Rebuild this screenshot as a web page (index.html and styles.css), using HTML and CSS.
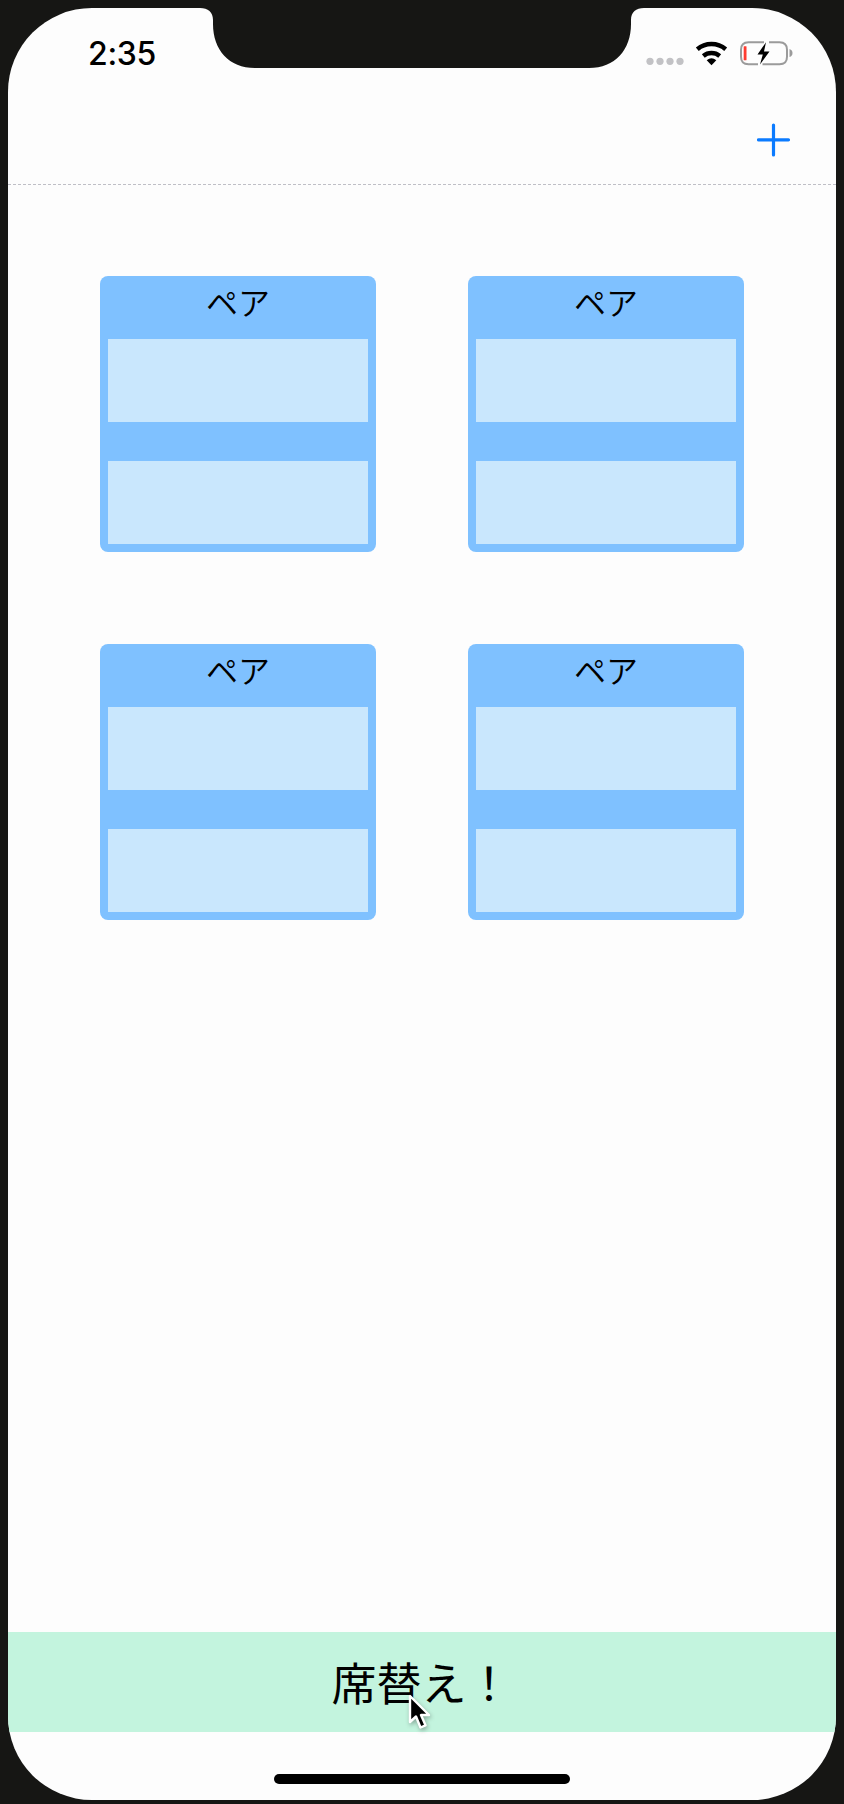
FILE: index.html
```html
<!DOCTYPE html>
<html lang="ja">
<head>
<meta charset="utf-8">
<title>席替え</title>
<link rel="stylesheet" href="styles.css">
</head>
<body>
<div class="phone">
  <div class="screen">
    <header class="status">
      <span class="time">2:35</span>
      <svg class="notch" width="444" height="60" viewBox="0 0 444 60" aria-hidden="true">
        <path d="M0 0C8 0 13 4 13 12V16C13 42 29 60 55 60H389C415 60 431 42 431 16V12C431 4 436 0 444 0Z"/>
      </svg>
      <svg class="indicators" width="150" height="28" viewBox="0 0 150 28" aria-hidden="true">
        <g fill="#c2c2c5"><circle cx="6" cy="22.300" r="3.600"/><circle cx="16" cy="22.300" r="3.600"/><circle cx="26" cy="22.300" r="3.600"/><circle cx="36" cy="22.300" r="3.600"/></g>
        <g fill="none" stroke="#000" stroke-width="4.500"><path d="M53.300 10.300A22 22 0 0 1 81.700 10.300"/><path d="M59.300 17A13 13 0 0 1 75.700 17"/></g>
        <path d="M62.700 21.200Q67.500 17.200 72.300 21.200L67.500 26.200Z"/>
        <path d="M120 3.200H104.500Q97 3.200 97 10.700V17.700Q97 25.200 104.500 25.200H114M125 3.200H135.500Q143 3.200 143 10.700V17.700Q143 25.200 135.500 25.200H118.500" fill="none" stroke="#9b9b9b" stroke-width="2"/>
        <path d="M145.500 10Q148.500 11 148.500 14Q148.500 17 145.500 18Z" fill="#9b9b9b"/>
        <rect x="99.700" y="7.200" width="2.800" height="14" rx=".5" fill="#ff3b30"/>
        <path d="M122 3.200L113.500 15.500H118.800L116 25.500L125.500 12.500H120Z"/>
      </svg>
    </header>
    <nav class="navbar">
      <svg width="34" height="34" viewBox="0 0 34 34" role="img" aria-label="追加"><path d="M16.500 2V32M1.500 16.800H31.500" stroke="#0b7bff" stroke-width="3.200" stroke-linecap="round"/></svg>
    </nav>
    <main class="pairs">
      <section class="pair"><h2>ペア</h2><div class="seat"></div><div class="seat"></div></section>
      <section class="pair"><h2>ペア</h2><div class="seat"></div><div class="seat"></div></section>
      <section class="pair"><h2>ペア</h2><div class="seat"></div><div class="seat"></div></section>
      <section class="pair"><h2>ペア</h2><div class="seat"></div><div class="seat"></div></section>
    </main>
    <button class="shuffle">席替え！</button>
    <footer class="bottom"><div class="home"></div></footer>
  </div>
  <svg class="cursor" width="24" height="38" viewBox="0 0 24 38" aria-hidden="true"><path d="M2 2V28L8 22.500L12.500 33.500L17.500 31.300L13 21H21Z" stroke="#fff" stroke-width="2.400" stroke-linejoin="round"/></svg>
</div>
</body>
</html>
```
FILE: styles.css
```css
* { box-sizing: border-box; }
body { margin: 0; background: #161614; font-family: "Noto Sans CJK JP", sans-serif; color: #000; }
.phone { position: relative; width: 844px; height: 1804px; padding: 8px 8px 4px; }
.screen { height: 1792px; display: flex; flex-direction: column; background: #fdfdfd; border-radius: 84px; overflow: hidden; }
.status { height: 84px; display: flex; justify-content: space-between; align-items: flex-start; }
.time { width: 192px; padding: 26px 0 0 80px; font: 500 32px/40px Inter, sans-serif; letter-spacing: -0.3px; }
.notch { flex: none; fill: #161614; }
.indicators { flex: none; margin: 31px 42px 0 0; }
.navbar { height: 93px; padding: 31px 45px 0 0; display: flex; justify-content: flex-end; align-items: flex-start; border-bottom: 1px dashed #bfbfc6; }
.pairs { flex: 1; padding: 91px 92px 0; display: grid; grid-template-columns: 276px 276px; gap: 92px; align-content: start; }
.pair { height: 276px; padding: 0 8px 8px; display: flex; flex-direction: column; border-radius: 8px; background: #7fc1ff; }
.pair h2 { height: 63px; margin: 0; text-align: center; font-size: 32px; line-height: 51px; font-weight: 350; }
.seat { height: 83px; background: #c9e7fd; }
.seat + .seat { margin-top: 39px; }
.shuffle { height: 100px; border: 0; padding: 0 1px 0 0; background: #c3f4de; color: #000; font: 400 45px/100px "Noto Sans CJK JP", sans-serif; }
.bottom { height: 68px; padding-top: 42px; display: flex; justify-content: center; }
.home { width: 296px; height: 10px; border-radius: 5px; background: #000; }
.cursor { position: absolute; left: 408px; top: 1694px; filter: drop-shadow(1px 2px 2px rgba(0, 0, 0, .3)); }
```
